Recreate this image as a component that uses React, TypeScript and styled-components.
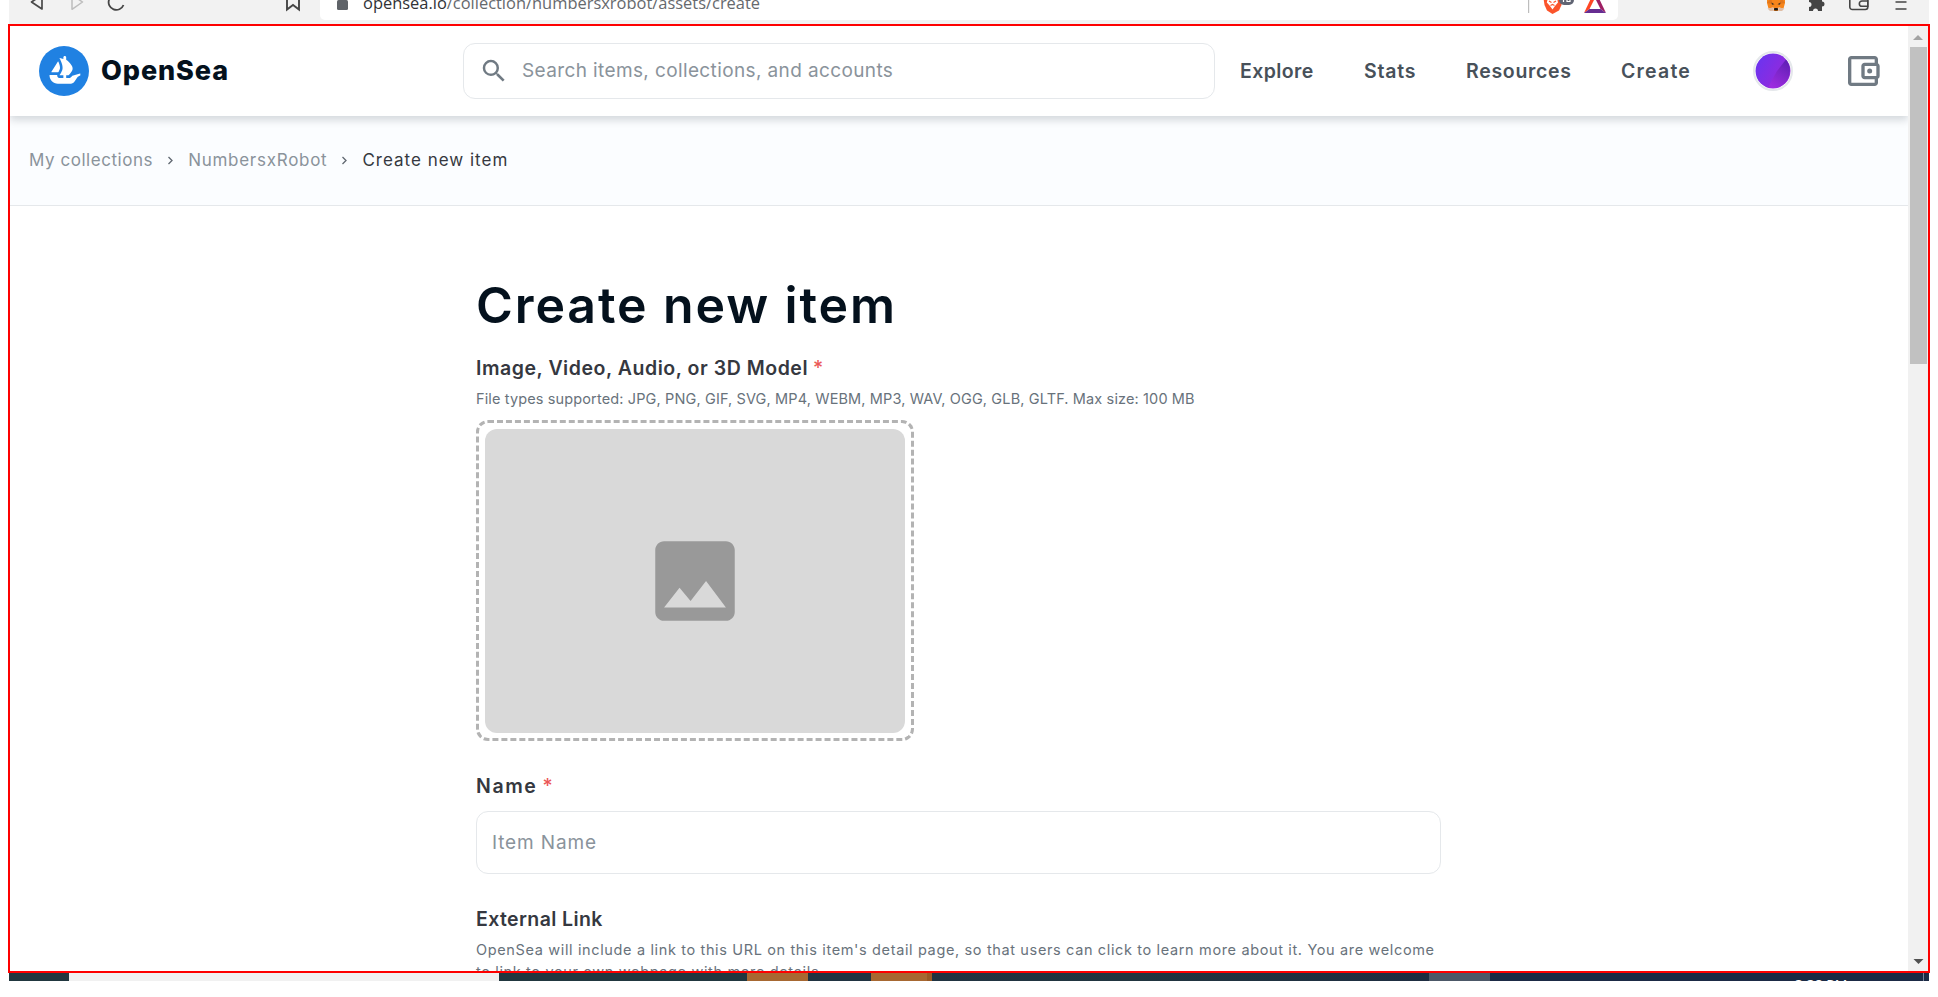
import React from "react";
import styled, { createGlobalStyle } from "styled-components";

const GlobalStyle = createGlobalStyle`
  * { box-sizing: border-box; }
  body { margin: 0; background: #fff; font-family: Inter, "Liberation Sans", sans-serif; }
  svg { display: block; flex: none; }
`;

const Screen = styled.div`
  display: flex;
  flex-direction: column;
  width: 1938px;
  height: 997px;
  overflow: hidden;
`;

/* ---------- Browser toolbar ---------- */

const BrowserBar = styled.div`
  display: flex;
  flex: none;
  width: 1920px;
  height: 24px;
  margin-left: 9px;
  background: #f2f2f2;
  overflow: hidden;
`;

const BarIcon = styled.svg<{ $gap: number }>`
  height: 24px;
  margin-left: ${(p) => p.$gap}px;
`;

const AddressBar = styled.div`
  display: flex;
  width: 1298px;
  height: 20px;
  margin-left: 18px;
  padding-right: 11px;
  background: #fff;
  border-radius: 0 0 5px 5px;
`;

const Url = styled.div`
  flex: 1;
  height: 24px;
  margin: -9px 0 0 14px;
  font: 16.45px/24px "Open Sans", sans-serif;
  color: #66696d;
  white-space: nowrap;
  b { font-weight: 400; color: #303236; }
`;

/* ---------- Page frame ---------- */

const Frame = styled.div`
  display: flex;
  flex: none;
  width: 1922px;
  height: 949px;
  margin-left: 8px;
  border: 2px solid #fe0000;
  overflow: hidden;
`;

const Page = styled.div`
  display: flex;
  flex-direction: column;
  width: 1898px;
  overflow: hidden;
`;

const Scrollbar = styled.div`
  display: flex;
  flex-direction: column;
  align-items: center;
  justify-content: space-between;
  width: 20px;
  background: #f1f1f1;
`;

const Thumb = styled.div`
  width: 17px;
  height: 317px;
  margin-bottom: auto;
  background: #c1c1c1;
`;

const Header = styled.header`
  display: flex;
  flex: none;
  align-items: center;
  height: 90px;
  padding-left: 29px;
  background: #fff;
  box-shadow: 0 4px 8px rgba(4, 17, 29, 0.16);
  z-index: 1;
`;

const Brand = styled.div`
  width: 374px;
  padding: 0 0 1px 12px;
  font-size: 27px;
  font-weight: 800;
  letter-spacing: 0.9px;
  color: #04111d;
`;

const SearchBox = styled.div`
  display: flex;
  align-items: center;
  width: 752px;
  height: 56px;
  margin-right: 25px;
  padding-left: 15px;
  border: 1px solid #e5e8eb;
  border-radius: 12px;
`;

const SearchHint = styled.span`
  padding: 0 0 2px 13px;
  font-size: 19px;
  letter-spacing: 0.38px;
  color: #8a939b;
`;

const NavLink = styled.a<{ $width: number; $spacing: number }>`
  width: ${(p) => p.$width}px;
  font-size: 19.5px;
  font-weight: 600;
  letter-spacing: ${(p) => p.$spacing}px;
  color: #48515a;
`;

const Avatar = styled.div`
  width: 40px;
  height: 40px;
  margin: 0 50px 0 1px;
  border: 2px solid #e5e8eb;
  border-radius: 50%;
  overflow: hidden;
`;

const Breadcrumbs = styled.nav`
  display: flex;
  flex: none;
  align-items: center;
  height: 90px;
  padding: 0 0 2px 19px;
  background: #fbfdff;
  border-bottom: 1px solid #e5e8eb;
`;

const Crumb = styled.span<{ $spacing: number; $active?: boolean }>`
  font-size: 17px;
  letter-spacing: ${(p) => p.$spacing}px;
  color: ${(p) => (p.$active ? "#353840" : "#8a939b")};
`;

const Chevron = styled.svg`
  margin: 2px 14px 0;
`;

/* ---------- Form ---------- */

const Form = styled.main`
  display: flex;
  flex-direction: column;
  width: 1000px;
  padding: 69px 0 0 466px;
  box-sizing: content-box;
`;

const Title = styled.h1`
  margin: 0 0 20px;
  font-size: 50px;
  line-height: 60px;
  font-weight: 600;
  letter-spacing: 1.9px;
  color: #04111d;
`;

const Label = styled.div<{ $spacing: number }>`
  display: flex;
  gap: 5px;
  font-size: 19.5px;
  line-height: 26px;
  font-weight: 600;
  letter-spacing: ${(p) => p.$spacing}px;
  color: #353840;
`;

const Required = styled.span`
  font-weight: 500;
  letter-spacing: 0;
  color: #eb5757;
`;

const Help = styled.p<{ $spacing: number }>`
  margin: 7px 0 10px;
  font-size: 14.5px;
  line-height: 22px;
  letter-spacing: ${(p) => p.$spacing}px;
  white-space: nowrap;
  color: #68727b;
`;

const DropZone = styled.div`
  width: 438px;
  height: 321px;
  margin-bottom: 32px;
  padding: 6px;
  border: 3px dashed #b3b3b3;
  border-radius: 12px;
`;

const Placeholder = styled.div`
  display: flex;
  align-items: center;
  justify-content: center;
  height: 304px;
  padding-bottom: 1px;
  background: #d9d9d9;
  border-radius: 12px;
`;

const TextField = styled.div`
  width: 965px;
  height: 63px;
  margin: 12px 0 32px;
  padding: 0 15px;
  border: 1px solid #e5e8eb;
  border-radius: 12px;
  font-size: 19px;
  line-height: 61px;
  letter-spacing: 0.85px;
  color: #8a939b;
`;

/* ---------- Desktop taskbar ---------- */

const Taskbar = styled.div`
  display: flex;
  flex: none;
  width: 1920px;
  height: 8px;
  margin-left: 9px;
  overflow: hidden;
`;

const Segment = styled.div<{ $width: number; $fill: string }>`
  width: ${(p) => p.$width}px;
  background: ${(p) => p.$fill};
`;

const Tray = styled.div`
  display: flex;
  flex: 1;
  justify-content: flex-end;
  background: #1b2a45;
`;

const Clock = styled.div`
  width: 129px;
  height: 20px;
  padding-top: 3px;
  border-right: 1px solid #77839a;
  margin-right: 5px;
  font: 14px/17px "Open Sans", sans-serif;
  color: #fff;
`;

const OpenSeaLogo = () => (
  <svg width="50" height="50" viewBox="0 0 90 90">
    <circle cx="45" cy="45" r="45" fill="#2081e2" />
    <path
      fill="#fff"
      d="M22.2 46.51l.2-.3 11.7-18.32c.17-.26.57-.24.7.05 1.96 4.39 3.65 9.84 2.86 13.23-.34 1.4-1.26 3.29-2.3 5.04-.14.25-.28.5-.44.74a.4.4 0 0 1-.34.18H22.54c-.32 0-.51-.35-.34-.62z"
    />
    <path
      fill="#fff"
      d="M74.38 49.91V52.81C74.38 52.98 74.28 53.13 74.13 53.19C73.22 53.58 70.12 55.01 68.83 56.8C65.54 61.38 63.03 67.93 57.4 67.93H33.95C25.64 67.93 18.9 61.17 18.9 52.83V52.56C18.9 52.34 19.08 52.16 19.3 52.16H32.38C32.64 52.16 32.83 52.4 32.8 52.66C32.71 53.51 32.87 54.38 33.27 55.17C34.05 56.74 35.66 57.73 37.39 57.73H43.87V52.68H37.47C37.14 52.68 36.94 52.3 37.13 52.03C38 50.8 38.84 49.49 39.7 47.97C40.28 46.94 40.85 45.85 41.31 44.75C41.55 44.14 41.8 43.47 41.9 43.14C42.35 41.36 42.45 40.37 42.45 39.35C42.4 37.68 42.32 37.24 42.26 36.8C42 35.04 41.86 34.46 41.71 33.87C41.2 31.9 40.54 29.97 40.1 28.82C39.57 27.48 39.02 26.22 38.76 25.65C38.2 24.4 37.83 23.73 37.75 23.54L36.96 22.08C36.85 21.88 37.04 21.65 37.25 21.71L42.2 23.05L43.87 23.51V20.57C43.87 19.15 45 18 46.41 18C47.81 18 48.95 19.15 48.95 20.57V24.94L49.48 25.08L50.15 25.56C51.25 26.46 51.82 26.95 52.44 27.52C53.72 28.71 54.62 29.59 55.48 30.56C56.44 31.69 56.7 31.99 56.92 32.28C57.52 33.07 58.07 33.89 58.2 34.09C58.86 35.17 59.16 35.72 59.16 35.72C60.11 38.01 60.27 38.76 60.27 38.76C60.45 39.75 60.47 39.99 60.47 39.99C60.51 41.52 60.34 42.3 60.34 42.3C59.96 43.58 59.7 44.21 59.7 44.21C59.1 45.5 58.71 46.1 58.71 46.1C57.96 47.24 57.81 47.45 57.81 47.45C56.77 48.83 56.55 49.07 56.55 49.07C55.63 50.11 55.05 50.75 55.05 50.75C54.15 51.67 53.67 52.11 53.67 52.11L53.16 52.57C53.09 52.64 52.99 52.67 52.89 52.67H48.95V57.73H53.91C55.02 57.73 56.07 57.34 56.92 56.61C57.21 56.36 58.48 55.26 59.99 53.6C60.04 53.54 60.1 53.5 60.18 53.48L73.87 49.53C74.12 49.45 74.38 49.65 74.38 49.91Z"
    />
  </svg>
);

const BrowserToolbar = () => (
  <BrowserBar>
    <BarIcon $gap={20} width="18" viewBox="0 0 18 24" fill="none" stroke="#4a4a4a" strokeWidth="1.7" strokeLinejoin="round">
      <path d="M13 -5V9L2.5 2z" />
    </BarIcon>
    <BarIcon $gap={22} width="18" viewBox="0 0 18 24" fill="none" stroke="#bdbdbd" strokeWidth="1.5" strokeLinejoin="round">
      <path d="M3 -5V9.3L13.5 2z" />
    </BarIcon>
    <BarIcon $gap={20} width="20" viewBox="0 0 20 24" fill="none" stroke="#454545" strokeWidth="1.8">
      <path d="M17 -1.5h-6M16.5 5A7.7 7.7 0 1 1 12 -5" />
    </BarIcon>
    <BarIcon $gap={157} width="18" viewBox="0 0 18 24" fill="none" stroke="#454545" strokeWidth="1.9">
      <path d="M3 -4V9.5L9 5l6 4.5V-4" />
    </BarIcon>
    <AddressBar>
      <BarIcon $gap={16} width="13" viewBox="0 0 13 24">
        <rect x="1" y="0" width="11" height="10" rx="1.5" fill="#5f6368" />
      </BarIcon>
      <Url>
        <b>opensea.io</b>/collection/numbersxrobot/assets/create
      </Url>
      <BarIcon $gap={0} width="2" viewBox="0 0 2 24">
        <rect width="1.2" height="13" fill="#bdbdbd" />
      </BarIcon>
      <BarIcon $gap={12} width="34" viewBox="0 0 34 24">
        <path d="M1 -5H20L19.5 5 17 10.5 10.5 14 5 10.5 2.5 5z" fill="#fb542b" />
        <path d="M6 -2L4.8 2.5 8 6 10.5 9.5 13 6 16 2.5 15 -2z" fill="#fff" />
        <path d="M7 1l2.5 1.5M14 1l-2.5 1.5M8.5 5.5l2-1 2 1" stroke="#fb542b" strokeWidth="1.2" fill="none" />
        <rect x="17" y="-8" width="15" height="13" rx="5" fill="#606473" />
        <path d="M21.5 -3V2M25 1.5h3V-1.5h-3z" stroke="#fff" strokeWidth="1.2" fill="none" />
      </BarIcon>
      <BarIcon $gap={7} width="24" viewBox="0 0 24 24">
        <path d="M12 -10L1 13l5.5-4L12 -2z" fill="#ff4724" />
        <path d="M12 -10L23 13l-5.5-4L12 -2z" fill="#9e1f63" />
        <path d="M1 13h22l-5.5-4h-11z" fill="#662d91" />
      </BarIcon>
    </AddressBar>
    <BarIcon $gap={148} width="20" viewBox="0 0 20 24">
      <path d="M1 -4H19V3L17.5 8.5 12.5 7.5 12 11H8L7.5 7.5 2.5 8.5 1 3z" fill="#f6851b" />
      <path d="M1 3l5.5 1L5 -2zM19 3l-5.5 1L15 -2z" fill="#e2761b" />
      <path d="M1.5 8.5L7 7.5 8 11H4zM18.5 8.5L13 7.5 12 11h4z" fill="#dfbda5" />
      <path d="M5.5 2.5l3 1.7-2.5.5zM14.5 2.5l-3 1.7 2.5.5z" fill="#3b3026" />
      <rect x="8" y="8" width="4" height="2.5" rx="1" fill="#161616" />
    </BarIcon>
    <BarIcon $gap={20} width="20" viewBox="0 0 20 24" fill="#454545">
      <path d="M3 -4H16V1.5a2.3 2.3 0 0 1 0 5V11h-4a2.5 2.5 0 0 0-5 0H3V7a2.5 2.5 0 0 0 0-5z" />
    </BarIcon>
    <BarIcon $gap={22} width="22" viewBox="0 0 22 24" fill="none" stroke="#454545" strokeWidth="1.6">
      <path d="M1.8 -5V7a2.5 2.5 0 0 0 2.5 2.5h13A2.5 2.5 0 0 0 19.8 7V-4M20 1h-6a2.5 2.5 0 0 0 0 5.3h6z" />
    </BarIcon>
    <BarIcon $gap={25} width="12" viewBox="0 0 12 24" stroke="#454545" strokeWidth="1.5">
      <path d="M.5 2h11M.5 9h11" />
    </BarIcon>
  </BrowserBar>
);

export default function App() {
  return (
    <Screen>
      <GlobalStyle />
      <BrowserToolbar />
      <Frame>
        <Page>
          <Header>
            <OpenSeaLogo />
            <Brand>OpenSea</Brand>
            <SearchBox>
              <svg width="30" height="30" viewBox="0 0 24 24" fill="#707a83">
                <path d="M15.5 14h-.79l-.28-.27A6.471 6.471 0 0 0 16 9.5 6.5 6.5 0 1 0 9.5 16c1.61 0 3.09-.59 4.23-1.57l.27.28v.79l5 4.99L20.49 19l-4.99-5zm-6 0C7.01 14 5 11.99 5 9.5S7.01 5 9.5 5 14 7.01 14 9.5 11.99 14 9.5 14z" />
              </svg>
              <SearchHint>Search items, collections, and accounts</SearchHint>
            </SearchBox>
            <NavLink $width={124} $spacing={0.4}>Explore</NavLink>
            <NavLink $width={102} $spacing={0.8}>Stats</NavLink>
            <NavLink $width={155} $spacing={0.7}>Resources</NavLink>
            <NavLink $width={131} $spacing={1.2}>Create</NavLink>
            <Avatar>
              <svg width="36" height="36" viewBox="0 0 36 36">
                <defs>
                  <linearGradient id="violet" x1="0" y1="0.2" x2="1" y2="0.8">
                    <stop offset="0" stopColor="#6a34f0" />
                    <stop offset="0.6" stopColor="#8a2ce0" />
                    <stop offset="1" stopColor="#9a2cdc" />
                  </linearGradient>
                  <linearGradient id="dusk" x1="0.9" y1="0" x2="0.3" y2="1">
                    <stop offset="0" stopColor="#4f1aa8" />
                    <stop offset="0.5" stopColor="#7a24c4" />
                    <stop offset="1" stopColor="#a02be0" />
                  </linearGradient>
                </defs>
                <circle cx="18" cy="18" r="17.5" fill="url(#violet)" />
                <path d="M31 6.5L22 18 13 34.5a17.5 17.5 0 0 0 18-28z" fill="url(#dusk)" opacity=".8" />
              </svg>
            </Avatar>
            <svg width="40" height="40" viewBox="0 0 24 24" fill="#707a83">
              <path d="M21 7.28V5c0-1.1-.9-2-2-2H5c-1.11 0-2 .9-2 2v14c0 1.1.89 2 2 2h14c1.1 0 2-.9 2-2v-2.28A2 2 0 0 0 22 15V9a2 2 0 0 0-1-1.72zM20 9v6h-7V9h7zM5 19V5h14v2h-6c-1.1 0-2 .9-2 2v6c0 1.1.9 2 2 2h6v2H5z" />
              <circle cx="16" cy="12" r="1.5" />
            </svg>
          </Header>
          <Breadcrumbs>
            <Crumb $spacing={0.55}>My collections</Crumb>
            <Chevron width="7" height="9" viewBox="0 0 7 9" fill="none" stroke="#5f6770" strokeWidth="1.3">
              <path d="M1.5 1L5 4.5 1.5 8" />
            </Chevron>
            <Crumb $spacing={0.73}>NumbersxRobot</Crumb>
            <Chevron width="7" height="9" viewBox="0 0 7 9" fill="none" stroke="#5f6770" strokeWidth="1.3">
              <path d="M1.5 1L5 4.5 1.5 8" />
            </Chevron>
            <Crumb $spacing={1} $active>Create new item</Crumb>
          </Breadcrumbs>
          <Form>
            <Title>Create new item</Title>
            <Label $spacing={0.54}>
              Image, Video, Audio, or 3D Model <Required>*</Required>
            </Label>
            <Help $spacing={0.13}>
              File types supported: JPG, PNG, GIF, SVG, MP4, WEBM, MP3, WAV, OGG, GLB, GLTF. Max size: 100 MB
            </Help>
            <DropZone>
              <Placeholder>
                <svg width="106" height="106" viewBox="0 0 24 24" fill="#999">
                  <path d="M21 19V5c0-1.1-.9-2-2-2H5c-1.1 0-2 .9-2 2v14c0 1.1.9 2 2 2h14c1.1 0 2-.9 2-2zM8.5 13.5l2.5 3.01L14.5 12l4.5 6H5l3.5-4.5z" />
                </svg>
              </Placeholder>
            </DropZone>
            <Label $spacing={1.6}>
              Name <Required>*</Required>
            </Label>
            <TextField>Item Name</TextField>
            <Label $spacing={0.4}>External Link</Label>
            <Help $spacing={0.64}>
              OpenSea will include a link to this URL on this item's detail page, so that users can click to learn more about it. You are welcome
              <br />
              to link to your own webpage with more details.
            </Help>
          </Form>
        </Page>
        <Scrollbar>
          <svg width="20" height="21" viewBox="0 0 20 21">
            <path d="M5 14l5-5 5 5z" fill="#a3a3a3" />
          </svg>
          <Thumb />
          <svg width="20" height="21" viewBox="0 0 20 21">
            <path d="M5.5 9l5 5 5-5z" fill="#505050" />
          </svg>
        </Scrollbar>
      </Frame>
      <Taskbar>
        <Segment $width={60} $fill="#21373f" />
        <Segment $width={430} $fill="#f1f1f1" />
        <Segment $width={248} $fill="#21373f" />
        <Segment $width={61} $fill="#a76832" />
        <Segment $width={63} $fill="#203341" />
        <Segment $width={56} $fill="#a76832" />
        <Segment $width={5} $fill="#985a26" />
        <Segment $width={497} $fill="linear-gradient(90deg, #203341, #21353f 40%, #1e2d41)" />
        <Segment $width={61} $fill="#4c5867" />
        <Tray>
          <Clock>3:38 PM</Clock>
        </Tray>
      </Taskbar>
    </Screen>
  );
}
